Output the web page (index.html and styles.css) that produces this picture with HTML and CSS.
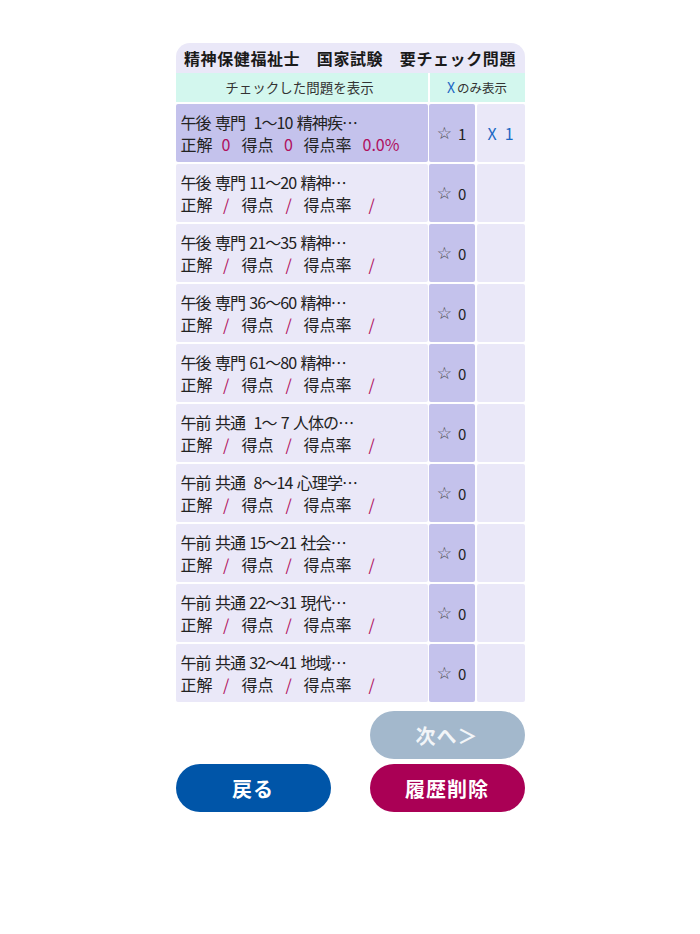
FILE: index.html
```html
<!DOCTYPE html>
<html lang="ja">
<head>
<meta charset="utf-8">
<title>要チェック問題</title>
<link rel="stylesheet" href="styles.css">
</head>
<body>
<div class="page">
  <div class="title">精神保健福祉士　国家試験　要チェック問題</div>
  <div class="head">
    <div class="head-main">チェックした問題を表示</div>
    <div class="head-x"><span class="xmark">X</span>のみ表示</div>
  </div>
  <div class="list">
    <div class="row selected">
      <div class="cell-main">
        <div class="name">午後 専門  1〜10 精神疾…</div>
        <div class="stats"><span class="lbl">正解</span><span class="val v1">0</span><span class="lbl">得点</span><span class="val v2">0</span><span class="lbl">得点率</span><span class="val rate">0.0%</span></div>
      </div>
      <div class="cell-star"><span class="star">☆</span><span class="num">1</span></div>
      <div class="cell-x"><span>X</span><span class="num">1</span></div>
    </div>
    <div class="row">
      <div class="cell-main">
        <div class="name">午後 専門 11〜20 精神…</div>
        <div class="stats"><span class="lbl">正解</span><span class="val v1">/</span><span class="lbl">得点</span><span class="val v2">/</span><span class="lbl">得点率</span><span class="val rate slash">/</span></div>
      </div>
      <div class="cell-star"><span class="star">☆</span><span class="num">0</span></div>
      <div class="cell-x"></div>
    </div>
    <div class="row">
      <div class="cell-main">
        <div class="name">午後 専門 21〜35 精神…</div>
        <div class="stats"><span class="lbl">正解</span><span class="val v1">/</span><span class="lbl">得点</span><span class="val v2">/</span><span class="lbl">得点率</span><span class="val rate slash">/</span></div>
      </div>
      <div class="cell-star"><span class="star">☆</span><span class="num">0</span></div>
      <div class="cell-x"></div>
    </div>
    <div class="row">
      <div class="cell-main">
        <div class="name">午後 専門 36〜60 精神…</div>
        <div class="stats"><span class="lbl">正解</span><span class="val v1">/</span><span class="lbl">得点</span><span class="val v2">/</span><span class="lbl">得点率</span><span class="val rate slash">/</span></div>
      </div>
      <div class="cell-star"><span class="star">☆</span><span class="num">0</span></div>
      <div class="cell-x"></div>
    </div>
    <div class="row">
      <div class="cell-main">
        <div class="name">午後 専門 61〜80 精神…</div>
        <div class="stats"><span class="lbl">正解</span><span class="val v1">/</span><span class="lbl">得点</span><span class="val v2">/</span><span class="lbl">得点率</span><span class="val rate slash">/</span></div>
      </div>
      <div class="cell-star"><span class="star">☆</span><span class="num">0</span></div>
      <div class="cell-x"></div>
    </div>
    <div class="row">
      <div class="cell-main">
        <div class="name">午前 共通  1〜 7 人体の…</div>
        <div class="stats"><span class="lbl">正解</span><span class="val v1">/</span><span class="lbl">得点</span><span class="val v2">/</span><span class="lbl">得点率</span><span class="val rate slash">/</span></div>
      </div>
      <div class="cell-star"><span class="star">☆</span><span class="num">0</span></div>
      <div class="cell-x"></div>
    </div>
    <div class="row">
      <div class="cell-main">
        <div class="name">午前 共通  8〜14 心理学…</div>
        <div class="stats"><span class="lbl">正解</span><span class="val v1">/</span><span class="lbl">得点</span><span class="val v2">/</span><span class="lbl">得点率</span><span class="val rate slash">/</span></div>
      </div>
      <div class="cell-star"><span class="star">☆</span><span class="num">0</span></div>
      <div class="cell-x"></div>
    </div>
    <div class="row">
      <div class="cell-main">
        <div class="name">午前 共通 15〜21 社会…</div>
        <div class="stats"><span class="lbl">正解</span><span class="val v1">/</span><span class="lbl">得点</span><span class="val v2">/</span><span class="lbl">得点率</span><span class="val rate slash">/</span></div>
      </div>
      <div class="cell-star"><span class="star">☆</span><span class="num">0</span></div>
      <div class="cell-x"></div>
    </div>
    <div class="row">
      <div class="cell-main">
        <div class="name">午前 共通 22〜31 現代…</div>
        <div class="stats"><span class="lbl">正解</span><span class="val v1">/</span><span class="lbl">得点</span><span class="val v2">/</span><span class="lbl">得点率</span><span class="val rate slash">/</span></div>
      </div>
      <div class="cell-star"><span class="star">☆</span><span class="num">0</span></div>
      <div class="cell-x"></div>
    </div>
    <div class="row">
      <div class="cell-main">
        <div class="name">午前 共通 32〜41 地域…</div>
        <div class="stats"><span class="lbl">正解</span><span class="val v1">/</span><span class="lbl">得点</span><span class="val v2">/</span><span class="lbl">得点率</span><span class="val rate slash">/</span></div>
      </div>
      <div class="cell-star"><span class="star">☆</span><span class="num">0</span></div>
      <div class="cell-x"></div>
    </div>
  </div>
  <div class="nav-next">
    <button class="btn btn-next">次へ＞</button>
  </div>
  <div class="nav-bottom">
    <button class="btn btn-back">戻る</button>
    <button class="btn btn-delete">履歴削除</button>
  </div>
</div>
</body>
</html>
```

FILE: styles.css
```css
html, body {
  margin: 0;
  padding: 0;
  background: #ffffff;
}
body {
  font-family: "Noto Sans CJK JP", "Noto Sans", sans-serif;
  color: #222222;
}
.page {
  width: 349px;
  margin: 43px auto 0;
}
.title {
  height: 30px;
  line-height: 30px;
  background: #eae8f8;
  border-radius: 14px 14px 0 0;
  font-size: 16px;
  font-weight: bold;
  letter-spacing: 0.6px;
  text-align: center;
  color: #1a1a1a;
  white-space: nowrap;
}
.head {
  display: flex;
  height: 29px;
  line-height: 29px;
  font-size: 13.5px;
  color: #333333;
}
.head-main {
  width: 252px;
  margin-right: 2px;
  background: #d3f7ee;
  text-align: center;
  padding-right: 4px;
  box-sizing: border-box;
}
.head-x {
  flex: 1;
  background: #d3f7ee;
  text-align: center;
  font-size: 12.5px;
}
.xmark {
  color: #1c68c4;
  font-size: 14px;
  margin-right: 2px;
}
.list {
  display: flex;
  flex-direction: column;
  gap: 2px;
  margin-top: 2px;
}
.row {
  display: flex;
  height: 58px;
}
.cell-main {
  width: 252px;
  margin-right: 1px;
  background: #eae8f8;
  border-radius: 2px;
  padding: 7px 0 0 5px;
  box-sizing: border-box;
  font-size: 16px;
  line-height: 22px;
}
.row.selected .cell-main {
  background: #c4c2ec;
}
.name {
  white-space: pre;
  letter-spacing: -0.9px;
  word-spacing: 1.5px;
}
.stats {
  display: flex;
  white-space: nowrap;
}
.val {
  color: #b0105e;
  text-align: center;
}
.val.v1 {
  width: 27px;
  padding-right: 2px;
}
.val.v2 {
  width: 30px;
}
.val.rate {
  margin-left: 11px;
}
.val.slash {
  margin-left: 17px;
}
.cell-star {
  width: 46px;
  margin-right: 2px;
  background: #c4c2ec;
  border-radius: 2px;
  display: flex;
  align-items: center;
  justify-content: center;
  font-size: 15px;
  color: #222222;
}
.star {
  font-family: "DejaVu Sans", sans-serif;
  font-size: 17px;
  color: #4a4a4a;
}
.num {
  margin-left: 6px;
}
.cell-x {
  flex: 1;
  background: #eae8f8;
  border-radius: 2px;
  display: flex;
  align-items: center;
  justify-content: center;
  font-size: 16px;
  color: #1c68c4;
}
.cell-x .num {
  margin-left: 8px;
}
.nav-next {
  display: flex;
  justify-content: flex-end;
  margin-top: 9px;
}
.nav-bottom {
  display: flex;
  justify-content: space-between;
  margin-top: 5px;
}
.btn {
  width: 155px;
  height: 48px;
  border: none;
  border-radius: 24px;
  color: #ffffff;
  font-family: "Noto Sans CJK JP", "Noto Sans", sans-serif;
  font-size: 20px;
  font-weight: bold;
  letter-spacing: 1px;
  padding: 0;
}
.btn-next {
  background: #a3b8cc;
  color: #f2f5f8;
}
.btn-back {
  background: #0055a8;
}
.btn-delete {
  background: #aa0055;
}
```
